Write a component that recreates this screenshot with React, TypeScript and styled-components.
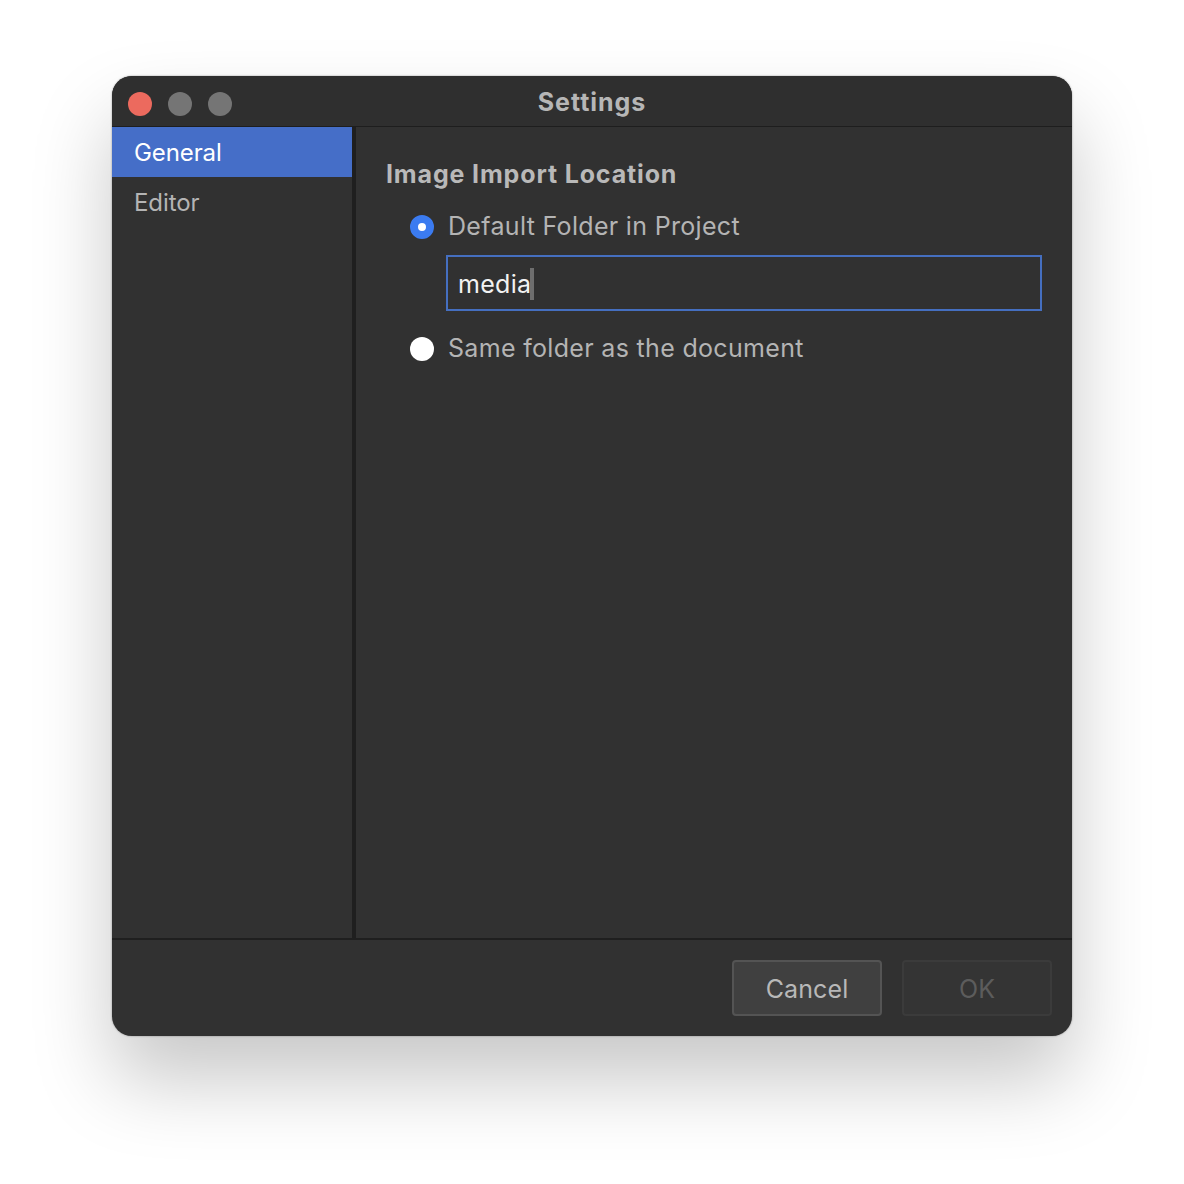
import React from 'react';
import styled, { createGlobalStyle } from 'styled-components';

const GlobalStyle = createGlobalStyle`
  html, body {
    margin: 0;
    padding: 0;
    background: #ffffff;
  }
  body {
    font-family: Inter, "Noto Sans", "Liberation Sans", sans-serif;
  }
`;

const App: React.FC = () => {
  return (
    <Page>
      <GlobalStyle />
      <Window>
        <TitleBar>
          <Lights>
            <Light color="#ec6a5e" />
            <Light color="#757575" />
            <Light color="#757575" />
          </Lights>
          <Title>Settings</Title>
        </TitleBar>
        <Body>
          <Sidebar>
            <NavItem $active>General</NavItem>
            <NavItem>Editor</NavItem>
          </Sidebar>
          <Content>
            <Heading>Image Import Location</Heading>
            <Options>
              <RadioRow>
                <Radio $checked />
                <RadioLabel>Default Folder in Project</RadioLabel>
              </RadioRow>
              <Field>
                media
                <Caret />
              </Field>
              <RadioRow>
                <Radio />
                <RadioLabel>Same folder as the document</RadioLabel>
              </RadioRow>
            </Options>
          </Content>
        </Body>
        <Footer>
          <Button>Cancel</Button>
          <Button disabled>OK</Button>
        </Footer>
      </Window>
    </Page>
  );
};

const Page = styled.div`
  box-sizing: border-box;
  width: 1184px;
  height: 1184px;
  padding: 76px 112px;
  overflow: hidden;
`;

const Window = styled.div`
  display: flex;
  flex-direction: column;
  width: 960px;
  height: 960px;
  border-radius: 20px;
  overflow: hidden;
  background-color: #313131;
  box-shadow: 0 44px 80px rgba(0, 0, 0, 0.22), 0 0 2px rgba(0, 0, 0, 0.4);
`;

const TitleBar = styled.div`
  position: relative;
  display: flex;
  align-items: center;
  justify-content: center;
  flex: none;
  height: 50px;
  border-bottom: 1px solid #1e1e1e;
  background-color: #2f2f2f;
`;

const Lights = styled.div`
  position: absolute;
  left: 16px;
  top: 16px;
  display: flex;
  gap: 16px;
`;

const Light = styled.span<{ color: string }>`
  width: 24px;
  height: 24px;
  border-radius: 50%;
  background-color: ${(p) => p.color};
`;

const Title = styled.div`
  margin-top: 2px;
  font-size: 25px;
  font-weight: 700;
  letter-spacing: 0.95px;
  color: #b6b6b6;
`;

const Body = styled.div`
  display: flex;
  flex: 1;
  min-height: 0;
`;

const Sidebar = styled.div`
  flex: none;
  width: 240px;
  border-right: 4px solid #1f1f1f;
`;

const NavItem = styled.div<{ $active?: boolean }>`
  height: 50px;
  padding-left: 22px;
  font-size: 24px;
  line-height: 52px;
  letter-spacing: -0.1px;
  color: ${(p) => (p.$active ? '#ffffff' : '#b4b4b4')};
  background-color: ${(p) => (p.$active ? '#456ec8' : 'transparent')};
`;

const Content = styled.div`
  flex: 1;
  padding: 30px 30px 0;
`;

const Heading = styled.div`
  font-size: 25px;
  font-weight: 700;
  line-height: 34px;
  letter-spacing: 0.85px;
  color: #b9b9b9;
`;

const Options = styled.div`
  display: flex;
  flex-direction: column;
  margin-top: 17px;
  padding-left: 24px;
`;

const RadioRow = styled.div`
  display: flex;
  align-items: center;
  gap: 14px;
  height: 36px;
`;

const Radio = styled.span<{ $checked?: boolean }>`
  box-sizing: border-box;
  width: 24px;
  height: 24px;
  margin-top: 2px;
  border-radius: 50%;
  background-color: #ffffff;
  ${(p) => (p.$checked ? 'border: 8px solid #3b7bf0;' : '')}
`;

const RadioLabel = styled.span`
  font-size: 25px;
  letter-spacing: 0.32px;
  color: #b4b4b4;
`;

const Field = styled.div`
  display: flex;
  align-items: center;
  box-sizing: border-box;
  height: 56px;
  margin: 11px 0 19px 36px;
  padding: 2px 0 0 10px;
  border: 2px solid #456fc0;
  font-size: 25px;
  letter-spacing: 0.3px;
  color: #f2f2f2;
`;

const Caret = styled.span`
  width: 4px;
  height: 32px;
  margin-left: -1px;
  background-color: #6e6e6e;
`;

const Footer = styled.div`
  display: flex;
  justify-content: flex-end;
  gap: 20px;
  flex: none;
  box-sizing: border-box;
  height: 98px;
  padding: 20px 20px 0;
  border-top: 2px solid #1f1f1f;
`;

const Button = styled.button`
  box-sizing: border-box;
  width: 150px;
  height: 56px;
  padding: 2px 0 0;
  border: 2px solid #545454;
  border-radius: 4px;
  background-color: #404040;
  font-family: inherit;
  font-size: 25px;
  letter-spacing: 0.1px;
  color: #b8b8b8;

  &:disabled {
    border-color: #3b3b3b;
    background-color: #343434;
    color: #5c5c5c;
  }
`;

export default React.memo(App);
